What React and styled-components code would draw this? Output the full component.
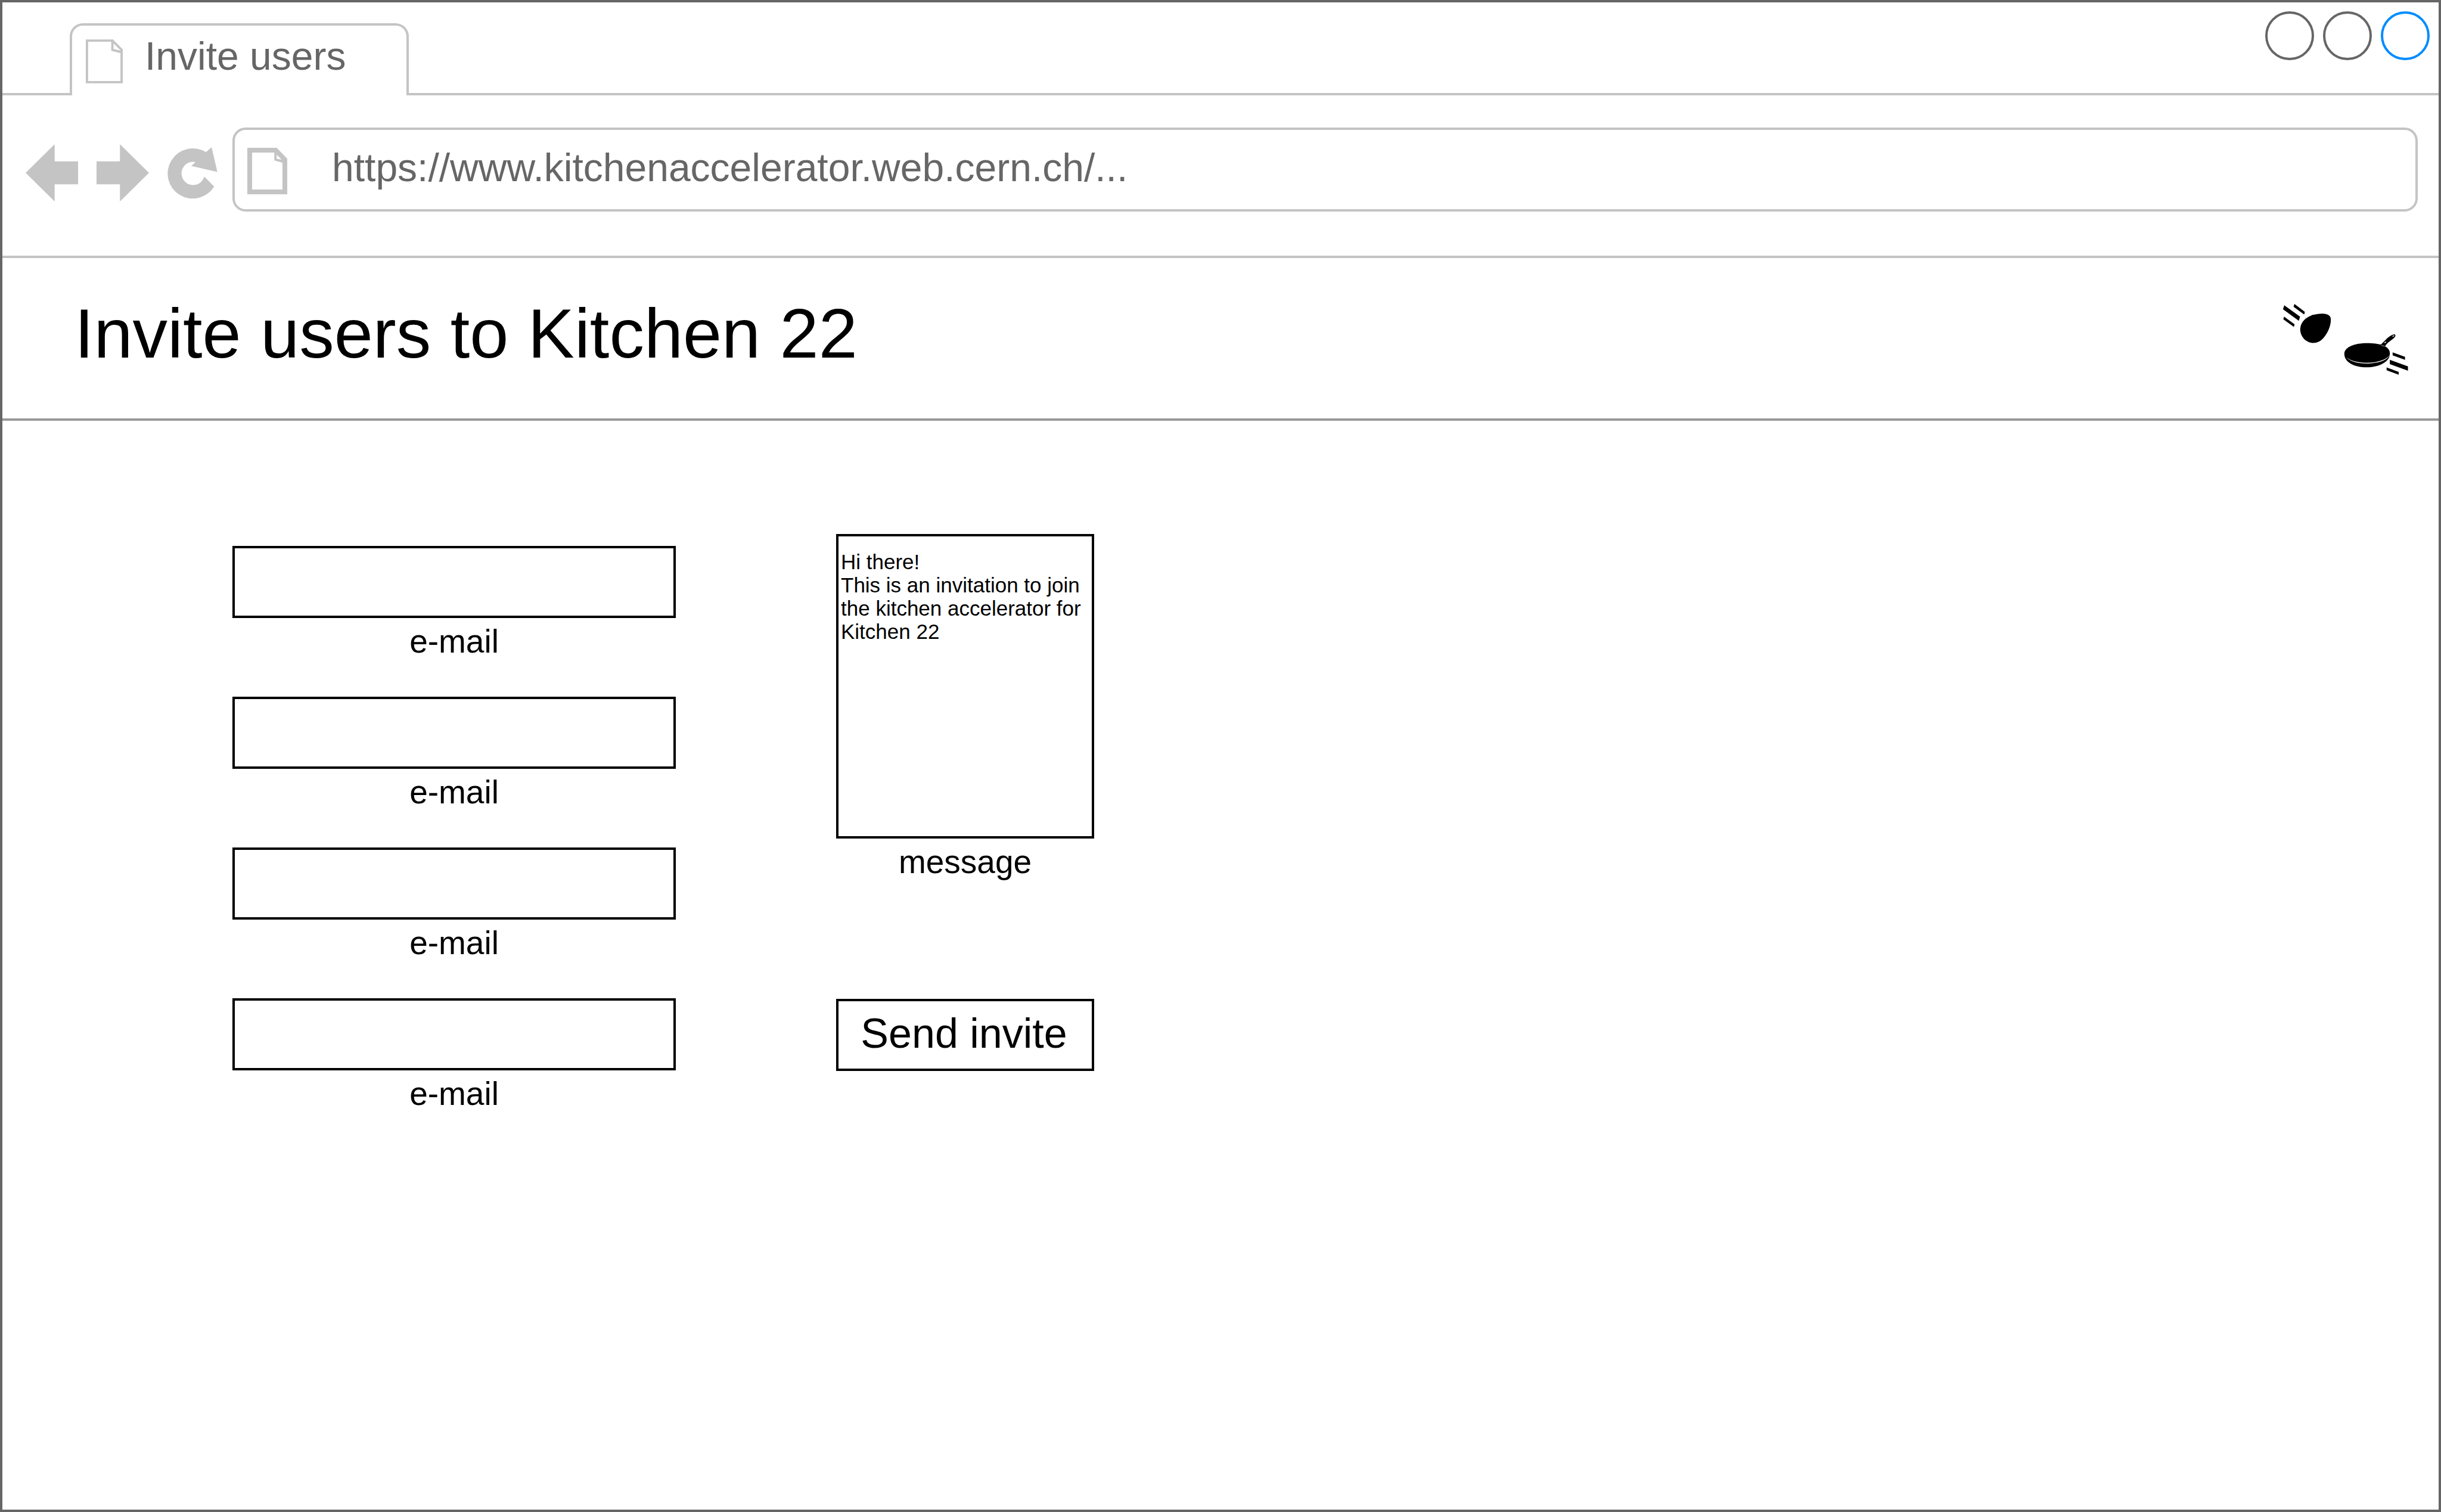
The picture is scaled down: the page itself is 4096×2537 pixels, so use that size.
import React from "react";
import styled, { createGlobalStyle } from "styled-components";

const color = {
  frame: "#666666",
  line: "#c4c4c4",
  divider: "#999999",
  accent: "#008cff",
  ink: "#000000",
  paper: "#ffffff",
};

const GlobalStyle = createGlobalStyle`
  *, *::before, *::after { box-sizing: border-box; }
  body {
    margin: 0;
    background: ${color.paper};
    font-family: "Liberation Sans", Arial, Helvetica, sans-serif;
  }
  button, input, textarea {
    font: inherit;
    margin: 0;
    padding: 0;
    border: 0;
    border-radius: 0;
    background: none;
    outline: none;
  }
  svg { display: block; flex: none; }
`;

const Window = styled.div`
  display: flex;
  flex-direction: column;
  min-height: 100vh;
  border: 4px solid ${color.frame};
  background: ${color.paper};
`;

const TabStrip = styled.div`
  display: flex;
  height: 156px;
`;

const StripLead = styled.div`
  width: 113px;
  border-bottom: 4px solid ${color.line};
`;

const StripRest = styled.div`
  flex: 1;
  display: flex;
  justify-content: flex-end;
  gap: 15px;
  padding: 15px 15px 0 0;
  border-bottom: 4px solid ${color.line};
`;

const Tab = styled.button`
  display: flex;
  align-items: flex-start;
  gap: 37px;
  width: 569px;
  margin-top: 35px;
  padding: 23px 23px 0;
  border: 4px solid ${color.line};
  border-bottom: 0;
  border-radius: 22px 22px 0 0;
  color: ${color.frame};
  font-size: 66px;
  line-height: 56px;
  white-space: nowrap;
`;

const WindowButton = styled.button`
  width: 82px;
  height: 82px;
  border: 4px solid ${(p) => (p.$accent ? color.accent : color.frame)};
  border-radius: 50%;
`;

const Toolbar = styled.div`
  display: flex;
  align-items: flex-start;
  gap: 25px;
  padding: 54px 35px 74px 39px;
  border-bottom: 4px solid ${color.line};
`;

const NavButtons = styled.div`
  display: flex;
  align-items: center;
  gap: 31px;
  padding-top: 28px;
`;

const NavButton = styled.button`
  color: ${color.line};
`;

const AddressBar = styled.div`
  flex: 1;
  display: flex;
  align-items: center;
  gap: 75px;
  height: 141px;
  padding: 4px 21px 0;
  border: 4px solid ${color.line};
  border-radius: 22px;
`;

const Address = styled.input`
  flex: 1;
  min-width: 0;
  padding-bottom: 12px;
  color: ${color.frame};
  font-size: 66px;
`;

const PageHeader = styled.header`
  display: flex;
  align-items: center;
  justify-content: space-between;
  height: 273px;
  padding: 4px 51px 0 121px;
  border-bottom: 4px solid ${color.divider};
`;

const Title = styled.h1`
  margin: 0;
  padding-bottom: 20px;
  color: ${color.ink};
  font-size: 117px;
  font-weight: 400;
  line-height: 134px;
`;

const InviteForm = styled.form`
  display: flex;
  align-items: flex-start;
  gap: 269px;
  padding: 190px 386px;
`;

const Recipients = styled.div`
  flex: 0 1 744px;
  display: flex;
  flex-direction: column;
  gap: 62px;
  padding-top: 20px;
`;

const Compose = styled.div`
  flex: 0 1 433px;
  display: flex;
  flex-direction: column;
  gap: 199px;
`;

const Field = styled.div`
  display: flex;
  flex-direction: column;
  gap: 8px;
`;

const Label = styled.label`
  color: ${color.ink};
  font-size: 55px;
  line-height: 62px;
  text-align: center;
`;

const EmailInput = styled.input`
  width: 100%;
  height: 121px;
  padding: 0 24px;
  border: 4px solid ${color.ink};
  font-size: 55px;
`;

const MessageInput = styled.textarea`
  width: 100%;
  height: 511px;
  padding: 23px 4px;
  border: 4px solid ${color.ink};
  color: ${color.ink};
  font-size: 35px;
  line-height: 39px;
  resize: none;
  overflow: hidden;
`;

const SendButton = styled.button`
  height: 121px;
  padding: 0 4px 6px 0;
  border: 4px solid ${color.ink};
  color: ${color.ink};
  font-size: 70px;
  white-space: nowrap;
`;

const TabPageIcon = () => (
  <svg width="62" height="74" viewBox="0 0 80 95" fill="none" stroke={color.line} strokeWidth="5" aria-hidden="true">
    <path d="M57.5 2.5H2.5V92.5H77.5V22.5L57.5 2.5V22.5L77.5 27.5" />
  </svg>
);

const SitePageIcon = () => (
  <svg width="67" height="78" viewBox="0 0 86 100" fill={color.line} fillRule="evenodd" aria-hidden="true">
    <path d="M0 0H63.3L86 23.3V100H0ZM10.3 10.3V89.7H75.7V32L58.1 27.3V10.3ZM63.3 14.7V23.3L74 25.7Z" />
  </svg>
);

const ArrowIcon = ({ forward }) => (
  <svg width="88" height="96" viewBox="0 0 112 124" preserveAspectRatio="none" fill="currentColor" aria-hidden="true">
    <path
      d={
        forward
          ? "M112 62L50 0V37H0V87H50V124Z"
          : "M0 62L62 0V37H112V87H62V124Z"
      }
    />
  </svg>
);

const ReloadIcon = () => (
  <svg width="84" height="86" viewBox="0 0 107.4 110.4" fill="currentColor" aria-hidden="true">
    <path d="M82.6 10.7L94.9 0L107.2 53.3L51 40.3L60.1 32A25 25 0 1 0 79.1 63.3L100.4 84.7A54 54 0 1 1 82.6 10.7Z" />
  </svg>
);

const Logo = () => (
  <svg width="210" height="119" viewBox="106 104 807 458" role="img" aria-label="Egg and frying pan">
    <g fill={color.ink}>
      <path d="M113 113L215 186L207 213L105 138Z" />
      <path d="M179 104L246 155L242 172L173 122Z" />
      <path d="M112 186L180 236L175 252L107 203Z" />
      <path d="M360 167C395 167 413 180 414 205C414 250 390 304 352 338C334 352 314 356 298 356C252 354 217 316 216 268C217 230 240 200 280 182C305 171 335 167 360 167Z" />
      <path d="M813 417L893 446V465L813 436Z" />
      <path d="M795 465L912 507V535L795 493Z" />
      <path d="M774 514L852 543V561L774 532Z" />
      <path d="M501 425C503 380 570 357 648 357C690 357 720 362 737 367C762 342 790 306 822 300C832 300 833 308 828 317C815 335 776 352 764 378C785 388 796 405 795 425C795 480 720 513 645 513C565 513 500 480 501 425Z" />
    </g>
    <g fill={color.paper}>
      <path d="M512 447C540 472 590 484 645 484C710 484 772 466 794 434C778 470 710 489 645 489C590 489 535 475 512 447Z" />
      <ellipse cx="818" cy="311" rx="7" ry="3" transform="rotate(-25 818 311)" />
      <ellipse cx="765" cy="352" rx="7" ry="3" transform="rotate(-25 765 352)" />
      <path d="M741 371L762 376V378L741 373Z" />
    </g>
  </svg>
);

const recipients = ["email-1", "email-2", "email-3", "email-4"];

export default function App() {
  return (
    <>
      <GlobalStyle />
      <Window>
        <TabStrip>
          <StripLead />
          <Tab type="button">
            <TabPageIcon />
            <span>Invite users</span>
          </Tab>
          <StripRest>
            <WindowButton type="button" aria-label="Minimize" />
            <WindowButton type="button" aria-label="Maximize" />
            <WindowButton type="button" aria-label="Close" $accent />
          </StripRest>
        </TabStrip>

        <Toolbar>
          <NavButtons>
            <NavButton type="button" aria-label="Back">
              <ArrowIcon />
            </NavButton>
            <NavButton type="button" aria-label="Forward">
              <ArrowIcon forward />
            </NavButton>
            <NavButton type="button" aria-label="Reload">
              <ReloadIcon />
            </NavButton>
          </NavButtons>
          <AddressBar>
            <SitePageIcon />
            <Address
              type="text"
              aria-label="Address"
              defaultValue="https://www.kitchenaccelerator.web.cern.ch/..."
            />
          </AddressBar>
        </Toolbar>

        <PageHeader>
          <Title>Invite users to Kitchen 22</Title>
          <Logo />
        </PageHeader>

        <InviteForm onSubmit={(e) => e.preventDefault()}>
          <Recipients>
            {recipients.map((id) => (
              <Field key={id}>
                <EmailInput id={id} type="email" />
                <Label htmlFor={id}>e-mail</Label>
              </Field>
            ))}
          </Recipients>
          <Compose>
            <Field>
              <MessageInput
                id="message"
                defaultValue={
                  "Hi there!\nThis is an invitation to join the kitchen accelerator for Kitchen 22"
                }
              />
              <Label htmlFor="message">message</Label>
            </Field>
            <SendButton type="submit">Send invite</SendButton>
          </Compose>
        </InviteForm>
      </Window>
    </>
  );
}
